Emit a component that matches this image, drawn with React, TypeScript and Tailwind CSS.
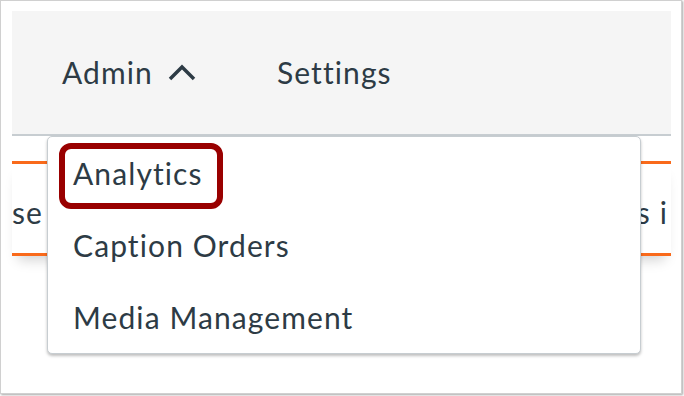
import React from 'react';

const items = ['Analytics', 'Caption Orders', 'Media Management'];

const Chevron: React.FC = () => (
  <svg width="28" height="17" viewBox="0 0 28 17" fill="none">
    <polyline points="2,15 14,3 26,15" stroke="#2d3b45" strokeWidth="3.5" />
  </svg>
);

const App: React.FC = () => {
  return (
    <div className="w-[684px] h-[396px] bg-white font-['Lato',sans-serif] text-[#2d3b45] tracking-[1.1px]">
      <div className="relative w-[682px] h-[394px] border border-[#d0d0d0] shadow-[1px_1px_2px_rgba(0,0,0,0.35)] pt-[10px] pl-[11px] pr-[10px] overflow-hidden">
        {/* top nav */}
        <div className="h-[125px] bg-[#f5f5f5] border-b-2 border-[#c7cdd1] flex items-center pl-[50px] text-[30px]">
          <span>Admin</span>
          <span className="ml-[15px] mr-[81px] flex items-center">
            <Chevron />
          </span>
          <span>Settings</span>
        </div>

        {/* page content behind the menu */}
        <div className="mt-[25px] h-[95px] border-y-[3px] border-[#f96a1b] shadow-[0_10px_12px_-6px_rgba(0,0,0,0.18)] pt-[26px] flex justify-between text-[30px] whitespace-nowrap">
          <span>se</span>
          <span className="pr-[3px]">s i</span>
        </div>

        {/* dropdown */}
        <div className="absolute left-[46px] top-[135px] w-[594px] bg-white border border-[#c7cdd1] rounded-[5px] shadow-[0_2px_3px_rgba(0,0,0,0.25)]">
          {items.map((item, i) => (
            <div key={item} className="relative h-[72px] leading-[72px] pl-[25px] text-[30px]">
              {item}
              {i === 0 && (
                <div className="absolute left-[11px] top-[6px] w-[164px] h-[66px] border-[6px] border-[#990000] rounded-[12px]" />
              )}
            </div>
          ))}
        </div>
      </div>
    </div>
  );
};

export default App;
